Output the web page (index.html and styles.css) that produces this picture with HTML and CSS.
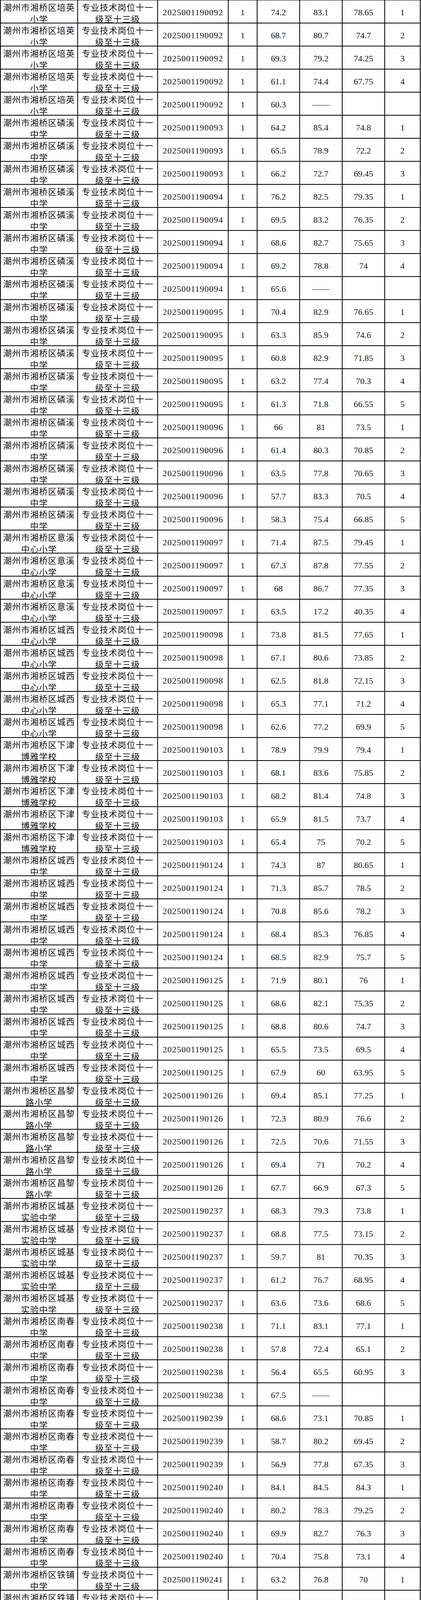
FILE: index.html
```html
<!DOCTYPE html>
<html lang="zh-CN">
<head>
<meta charset="utf-8">
<title>成绩表</title>
<link rel="stylesheet" href="styles.css">
</head>
<body>
<div class="sheet">
<div class="r"><span class="c t">潮州市湘桥区培英小学</span><span class="c t">专业技术岗位十一级至十三级</span><span class="c id">2025001190092</span><span class="c">1</span><span class="c">74.2</span><span class="c">83.1</span><span class="c">78.65</span><span class="c">1</span></div>
<div class="r"><span class="c t">潮州市湘桥区培英小学</span><span class="c t">专业技术岗位十一级至十三级</span><span class="c id">2025001190092</span><span class="c">1</span><span class="c">68.7</span><span class="c">80.7</span><span class="c">74.7</span><span class="c">2</span></div>
<div class="r"><span class="c t">潮州市湘桥区培英小学</span><span class="c t">专业技术岗位十一级至十三级</span><span class="c id">2025001190092</span><span class="c">1</span><span class="c">69.3</span><span class="c">79.2</span><span class="c">74.25</span><span class="c">3</span></div>
<div class="r"><span class="c t">潮州市湘桥区培英小学</span><span class="c t">专业技术岗位十一级至十三级</span><span class="c id">2025001190092</span><span class="c">1</span><span class="c">61.1</span><span class="c">74.4</span><span class="c">67.75</span><span class="c">4</span></div>
<div class="r"><span class="c t">潮州市湘桥区培英小学</span><span class="c t">专业技术岗位十一级至十三级</span><span class="c id">2025001190092</span><span class="c">1</span><span class="c">60.3</span><span class="c">——</span><span class="c"></span><span class="c"></span></div>
<div class="r"><span class="c t">潮州市湘桥区磷溪中学</span><span class="c t">专业技术岗位十一级至十三级</span><span class="c id">2025001190093</span><span class="c">1</span><span class="c">64.2</span><span class="c">85.4</span><span class="c">74.8</span><span class="c">1</span></div>
<div class="r"><span class="c t">潮州市湘桥区磷溪中学</span><span class="c t">专业技术岗位十一级至十三级</span><span class="c id">2025001190093</span><span class="c">1</span><span class="c">65.5</span><span class="c">78.9</span><span class="c">72.2</span><span class="c">2</span></div>
<div class="r"><span class="c t">潮州市湘桥区磷溪中学</span><span class="c t">专业技术岗位十一级至十三级</span><span class="c id">2025001190093</span><span class="c">1</span><span class="c">66.2</span><span class="c">72.7</span><span class="c">69.45</span><span class="c">3</span></div>
<div class="r"><span class="c t">潮州市湘桥区磷溪中学</span><span class="c t">专业技术岗位十一级至十三级</span><span class="c id">2025001190094</span><span class="c">1</span><span class="c">76.2</span><span class="c">82.5</span><span class="c">79.35</span><span class="c">1</span></div>
<div class="r"><span class="c t">潮州市湘桥区磷溪中学</span><span class="c t">专业技术岗位十一级至十三级</span><span class="c id">2025001190094</span><span class="c">1</span><span class="c">69.5</span><span class="c">83.2</span><span class="c">76.35</span><span class="c">2</span></div>
<div class="r"><span class="c t">潮州市湘桥区磷溪中学</span><span class="c t">专业技术岗位十一级至十三级</span><span class="c id">2025001190094</span><span class="c">1</span><span class="c">68.6</span><span class="c">82.7</span><span class="c">75.65</span><span class="c">3</span></div>
<div class="r"><span class="c t">潮州市湘桥区磷溪中学</span><span class="c t">专业技术岗位十一级至十三级</span><span class="c id">2025001190094</span><span class="c">1</span><span class="c">69.2</span><span class="c">78.8</span><span class="c">74</span><span class="c">4</span></div>
<div class="r"><span class="c t">潮州市湘桥区磷溪中学</span><span class="c t">专业技术岗位十一级至十三级</span><span class="c id">2025001190094</span><span class="c">1</span><span class="c">65.6</span><span class="c">——</span><span class="c"></span><span class="c"></span></div>
<div class="r"><span class="c t">潮州市湘桥区磷溪中学</span><span class="c t">专业技术岗位十一级至十三级</span><span class="c id">2025001190095</span><span class="c">1</span><span class="c">70.4</span><span class="c">82.9</span><span class="c">76.65</span><span class="c">1</span></div>
<div class="r"><span class="c t">潮州市湘桥区磷溪中学</span><span class="c t">专业技术岗位十一级至十三级</span><span class="c id">2025001190095</span><span class="c">1</span><span class="c">63.3</span><span class="c">85.9</span><span class="c">74.6</span><span class="c">2</span></div>
<div class="r"><span class="c t">潮州市湘桥区磷溪中学</span><span class="c t">专业技术岗位十一级至十三级</span><span class="c id">2025001190095</span><span class="c">1</span><span class="c">60.8</span><span class="c">82.9</span><span class="c">71.85</span><span class="c">3</span></div>
<div class="r"><span class="c t">潮州市湘桥区磷溪中学</span><span class="c t">专业技术岗位十一级至十三级</span><span class="c id">2025001190095</span><span class="c">1</span><span class="c">63.2</span><span class="c">77.4</span><span class="c">70.3</span><span class="c">4</span></div>
<div class="r"><span class="c t">潮州市湘桥区磷溪中学</span><span class="c t">专业技术岗位十一级至十三级</span><span class="c id">2025001190095</span><span class="c">1</span><span class="c">61.3</span><span class="c">71.8</span><span class="c">66.55</span><span class="c">5</span></div>
<div class="r"><span class="c t">潮州市湘桥区磷溪中学</span><span class="c t">专业技术岗位十一级至十三级</span><span class="c id">2025001190096</span><span class="c">1</span><span class="c">66</span><span class="c">81</span><span class="c">73.5</span><span class="c">1</span></div>
<div class="r"><span class="c t">潮州市湘桥区磷溪中学</span><span class="c t">专业技术岗位十一级至十三级</span><span class="c id">2025001190096</span><span class="c">1</span><span class="c">61.4</span><span class="c">80.3</span><span class="c">70.85</span><span class="c">2</span></div>
<div class="r"><span class="c t">潮州市湘桥区磷溪中学</span><span class="c t">专业技术岗位十一级至十三级</span><span class="c id">2025001190096</span><span class="c">1</span><span class="c">63.5</span><span class="c">77.8</span><span class="c">70.65</span><span class="c">3</span></div>
<div class="r"><span class="c t">潮州市湘桥区磷溪中学</span><span class="c t">专业技术岗位十一级至十三级</span><span class="c id">2025001190096</span><span class="c">1</span><span class="c">57.7</span><span class="c">83.3</span><span class="c">70.5</span><span class="c">4</span></div>
<div class="r"><span class="c t">潮州市湘桥区磷溪中学</span><span class="c t">专业技术岗位十一级至十三级</span><span class="c id">2025001190096</span><span class="c">1</span><span class="c">58.3</span><span class="c">75.4</span><span class="c">66.85</span><span class="c">5</span></div>
<div class="r"><span class="c t">潮州市湘桥区意溪中心小学</span><span class="c t">专业技术岗位十一级至十三级</span><span class="c id">2025001190097</span><span class="c">1</span><span class="c">71.4</span><span class="c">87.5</span><span class="c">79.45</span><span class="c">1</span></div>
<div class="r"><span class="c t">潮州市湘桥区意溪中心小学</span><span class="c t">专业技术岗位十一级至十三级</span><span class="c id">2025001190097</span><span class="c">1</span><span class="c">67.3</span><span class="c">87.8</span><span class="c">77.55</span><span class="c">2</span></div>
<div class="r"><span class="c t">潮州市湘桥区意溪中心小学</span><span class="c t">专业技术岗位十一级至十三级</span><span class="c id">2025001190097</span><span class="c">1</span><span class="c">68</span><span class="c">86.7</span><span class="c">77.35</span><span class="c">3</span></div>
<div class="r"><span class="c t">潮州市湘桥区意溪中心小学</span><span class="c t">专业技术岗位十一级至十三级</span><span class="c id">2025001190097</span><span class="c">1</span><span class="c">63.5</span><span class="c">17.2</span><span class="c">40.35</span><span class="c">4</span></div>
<div class="r"><span class="c t">潮州市湘桥区城西中心小学</span><span class="c t">专业技术岗位十一级至十三级</span><span class="c id">2025001190098</span><span class="c">1</span><span class="c">73.8</span><span class="c">81.5</span><span class="c">77.65</span><span class="c">1</span></div>
<div class="r"><span class="c t">潮州市湘桥区城西中心小学</span><span class="c t">专业技术岗位十一级至十三级</span><span class="c id">2025001190098</span><span class="c">1</span><span class="c">67.1</span><span class="c">80.6</span><span class="c">73.85</span><span class="c">2</span></div>
<div class="r"><span class="c t">潮州市湘桥区城西中心小学</span><span class="c t">专业技术岗位十一级至十三级</span><span class="c id">2025001190098</span><span class="c">1</span><span class="c">62.5</span><span class="c">81.8</span><span class="c">72.15</span><span class="c">3</span></div>
<div class="r"><span class="c t">潮州市湘桥区城西中心小学</span><span class="c t">专业技术岗位十一级至十三级</span><span class="c id">2025001190098</span><span class="c">1</span><span class="c">65.3</span><span class="c">77.1</span><span class="c">71.2</span><span class="c">4</span></div>
<div class="r"><span class="c t">潮州市湘桥区城西中心小学</span><span class="c t">专业技术岗位十一级至十三级</span><span class="c id">2025001190098</span><span class="c">1</span><span class="c">62.6</span><span class="c">77.2</span><span class="c">69.9</span><span class="c">5</span></div>
<div class="r"><span class="c t">潮州市湘桥区下津博雅学校</span><span class="c t">专业技术岗位十一级至十三级</span><span class="c id">2025001190103</span><span class="c">1</span><span class="c">78.9</span><span class="c">79.9</span><span class="c">79.4</span><span class="c">1</span></div>
<div class="r"><span class="c t">潮州市湘桥区下津博雅学校</span><span class="c t">专业技术岗位十一级至十三级</span><span class="c id">2025001190103</span><span class="c">1</span><span class="c">68.1</span><span class="c">83.6</span><span class="c">75.85</span><span class="c">2</span></div>
<div class="r"><span class="c t">潮州市湘桥区下津博雅学校</span><span class="c t">专业技术岗位十一级至十三级</span><span class="c id">2025001190103</span><span class="c">1</span><span class="c">68.2</span><span class="c">81.4</span><span class="c">74.8</span><span class="c">3</span></div>
<div class="r"><span class="c t">潮州市湘桥区下津博雅学校</span><span class="c t">专业技术岗位十一级至十三级</span><span class="c id">2025001190103</span><span class="c">1</span><span class="c">65.9</span><span class="c">81.5</span><span class="c">73.7</span><span class="c">4</span></div>
<div class="r"><span class="c t">潮州市湘桥区下津博雅学校</span><span class="c t">专业技术岗位十一级至十三级</span><span class="c id">2025001190103</span><span class="c">1</span><span class="c">65.4</span><span class="c">75</span><span class="c">70.2</span><span class="c">5</span></div>
<div class="r"><span class="c t">潮州市湘桥区城西中学</span><span class="c t">专业技术岗位十一级至十三级</span><span class="c id">2025001190124</span><span class="c">1</span><span class="c">74.3</span><span class="c">87</span><span class="c">80.65</span><span class="c">1</span></div>
<div class="r"><span class="c t">潮州市湘桥区城西中学</span><span class="c t">专业技术岗位十一级至十三级</span><span class="c id">2025001190124</span><span class="c">1</span><span class="c">71.3</span><span class="c">85.7</span><span class="c">78.5</span><span class="c">2</span></div>
<div class="r"><span class="c t">潮州市湘桥区城西中学</span><span class="c t">专业技术岗位十一级至十三级</span><span class="c id">2025001190124</span><span class="c">1</span><span class="c">70.8</span><span class="c">85.6</span><span class="c">78.2</span><span class="c">3</span></div>
<div class="r"><span class="c t">潮州市湘桥区城西中学</span><span class="c t">专业技术岗位十一级至十三级</span><span class="c id">2025001190124</span><span class="c">1</span><span class="c">68.4</span><span class="c">85.3</span><span class="c">76.85</span><span class="c">4</span></div>
<div class="r"><span class="c t">潮州市湘桥区城西中学</span><span class="c t">专业技术岗位十一级至十三级</span><span class="c id">2025001190124</span><span class="c">1</span><span class="c">68.5</span><span class="c">82.9</span><span class="c">75.7</span><span class="c">5</span></div>
<div class="r"><span class="c t">潮州市湘桥区城西中学</span><span class="c t">专业技术岗位十一级至十三级</span><span class="c id">2025001190125</span><span class="c">1</span><span class="c">71.9</span><span class="c">80.1</span><span class="c">76</span><span class="c">1</span></div>
<div class="r"><span class="c t">潮州市湘桥区城西中学</span><span class="c t">专业技术岗位十一级至十三级</span><span class="c id">2025001190125</span><span class="c">1</span><span class="c">68.6</span><span class="c">82.1</span><span class="c">75.35</span><span class="c">2</span></div>
<div class="r"><span class="c t">潮州市湘桥区城西中学</span><span class="c t">专业技术岗位十一级至十三级</span><span class="c id">2025001190125</span><span class="c">1</span><span class="c">68.8</span><span class="c">80.6</span><span class="c">74.7</span><span class="c">3</span></div>
<div class="r"><span class="c t">潮州市湘桥区城西中学</span><span class="c t">专业技术岗位十一级至十三级</span><span class="c id">2025001190125</span><span class="c">1</span><span class="c">65.5</span><span class="c">73.5</span><span class="c">69.5</span><span class="c">4</span></div>
<div class="r"><span class="c t">潮州市湘桥区城西中学</span><span class="c t">专业技术岗位十一级至十三级</span><span class="c id">2025001190125</span><span class="c">1</span><span class="c">67.9</span><span class="c">60</span><span class="c">63.95</span><span class="c">5</span></div>
<div class="r"><span class="c t">潮州市湘桥区昌黎路小学</span><span class="c t">专业技术岗位十一级至十三级</span><span class="c id">2025001190126</span><span class="c">1</span><span class="c">69.4</span><span class="c">85.1</span><span class="c">77.25</span><span class="c">1</span></div>
<div class="r"><span class="c t">潮州市湘桥区昌黎路小学</span><span class="c t">专业技术岗位十一级至十三级</span><span class="c id">2025001190126</span><span class="c">1</span><span class="c">72.3</span><span class="c">80.9</span><span class="c">76.6</span><span class="c">2</span></div>
<div class="r"><span class="c t">潮州市湘桥区昌黎路小学</span><span class="c t">专业技术岗位十一级至十三级</span><span class="c id">2025001190126</span><span class="c">1</span><span class="c">72.5</span><span class="c">70.6</span><span class="c">71.55</span><span class="c">3</span></div>
<div class="r"><span class="c t">潮州市湘桥区昌黎路小学</span><span class="c t">专业技术岗位十一级至十三级</span><span class="c id">2025001190126</span><span class="c">1</span><span class="c">69.4</span><span class="c">71</span><span class="c">70.2</span><span class="c">4</span></div>
<div class="r"><span class="c t">潮州市湘桥区昌黎路小学</span><span class="c t">专业技术岗位十一级至十三级</span><span class="c id">2025001190126</span><span class="c">1</span><span class="c">67.7</span><span class="c">66.9</span><span class="c">67.3</span><span class="c">5</span></div>
<div class="r"><span class="c t">潮州市湘桥区城基实验中学</span><span class="c t">专业技术岗位十一级至十三级</span><span class="c id">2025001190237</span><span class="c">1</span><span class="c">68.3</span><span class="c">79.3</span><span class="c">73.8</span><span class="c">1</span></div>
<div class="r"><span class="c t">潮州市湘桥区城基实验中学</span><span class="c t">专业技术岗位十一级至十三级</span><span class="c id">2025001190237</span><span class="c">1</span><span class="c">68.8</span><span class="c">77.5</span><span class="c">73.15</span><span class="c">2</span></div>
<div class="r"><span class="c t">潮州市湘桥区城基实验中学</span><span class="c t">专业技术岗位十一级至十三级</span><span class="c id">2025001190237</span><span class="c">1</span><span class="c">59.7</span><span class="c">81</span><span class="c">70.35</span><span class="c">3</span></div>
<div class="r"><span class="c t">潮州市湘桥区城基实验中学</span><span class="c t">专业技术岗位十一级至十三级</span><span class="c id">2025001190237</span><span class="c">1</span><span class="c">61.2</span><span class="c">76.7</span><span class="c">68.95</span><span class="c">4</span></div>
<div class="r"><span class="c t">潮州市湘桥区城基实验中学</span><span class="c t">专业技术岗位十一级至十三级</span><span class="c id">2025001190237</span><span class="c">1</span><span class="c">63.6</span><span class="c">73.6</span><span class="c">68.6</span><span class="c">5</span></div>
<div class="r"><span class="c t">潮州市湘桥区南春中学</span><span class="c t">专业技术岗位十一级至十三级</span><span class="c id">2025001190238</span><span class="c">1</span><span class="c">71.1</span><span class="c">83.1</span><span class="c">77.1</span><span class="c">1</span></div>
<div class="r"><span class="c t">潮州市湘桥区南春中学</span><span class="c t">专业技术岗位十一级至十三级</span><span class="c id">2025001190238</span><span class="c">1</span><span class="c">57.8</span><span class="c">72.4</span><span class="c">65.1</span><span class="c">2</span></div>
<div class="r"><span class="c t">潮州市湘桥区南春中学</span><span class="c t">专业技术岗位十一级至十三级</span><span class="c id">2025001190238</span><span class="c">1</span><span class="c">56.4</span><span class="c">65.5</span><span class="c">60.95</span><span class="c">3</span></div>
<div class="r"><span class="c t">潮州市湘桥区南春中学</span><span class="c t">专业技术岗位十一级至十三级</span><span class="c id">2025001190238</span><span class="c">1</span><span class="c">67.5</span><span class="c">——</span><span class="c"></span><span class="c"></span></div>
<div class="r"><span class="c t">潮州市湘桥区南春中学</span><span class="c t">专业技术岗位十一级至十三级</span><span class="c id">2025001190239</span><span class="c">1</span><span class="c">68.6</span><span class="c">73.1</span><span class="c">70.85</span><span class="c">1</span></div>
<div class="r"><span class="c t">潮州市湘桥区南春中学</span><span class="c t">专业技术岗位十一级至十三级</span><span class="c id">2025001190239</span><span class="c">1</span><span class="c">58.7</span><span class="c">80.2</span><span class="c">69.45</span><span class="c">2</span></div>
<div class="r"><span class="c t">潮州市湘桥区南春中学</span><span class="c t">专业技术岗位十一级至十三级</span><span class="c id">2025001190239</span><span class="c">1</span><span class="c">56.9</span><span class="c">77.8</span><span class="c">67.35</span><span class="c">3</span></div>
<div class="r"><span class="c t">潮州市湘桥区南春中学</span><span class="c t">专业技术岗位十一级至十三级</span><span class="c id">2025001190240</span><span class="c">1</span><span class="c">84.1</span><span class="c">84.5</span><span class="c">84.3</span><span class="c">1</span></div>
<div class="r"><span class="c t">潮州市湘桥区南春中学</span><span class="c t">专业技术岗位十一级至十三级</span><span class="c id">2025001190240</span><span class="c">1</span><span class="c">80.2</span><span class="c">78.3</span><span class="c">79.25</span><span class="c">2</span></div>
<div class="r"><span class="c t">潮州市湘桥区南春中学</span><span class="c t">专业技术岗位十一级至十三级</span><span class="c id">2025001190240</span><span class="c">1</span><span class="c">69.9</span><span class="c">82.7</span><span class="c">76.3</span><span class="c">3</span></div>
<div class="r"><span class="c t">潮州市湘桥区南春中学</span><span class="c t">专业技术岗位十一级至十三级</span><span class="c id">2025001190240</span><span class="c">1</span><span class="c">70.4</span><span class="c">75.8</span><span class="c">73.1</span><span class="c">4</span></div>
<div class="r"><span class="c t">潮州市湘桥区铁铺中学</span><span class="c t">专业技术岗位十一级至十三级</span><span class="c id">2025001190241</span><span class="c">1</span><span class="c">63.2</span><span class="c">76.8</span><span class="c">70</span><span class="c">1</span></div>
<div class="r"><span class="c t">潮州市湘桥区铁铺中学</span><span class="c t">专业技术岗位十一级至十三级</span><span class="c id">2025001190241</span><span class="c">1</span><span class="c">64.1</span><span class="c">75.1</span><span class="c">69.6</span><span class="c">2</span></div>
<div class="r"><span class="c t">潮州市湘桥区铁铺中学</span><span class="c t">专业技术岗位十一级至十三级</span><span class="c id">2025001190241</span><span class="c">1</span><span class="c">59.5</span><span class="c">72.7</span><span class="c">66.1</span><span class="c">3</span></div>
<div class="r"><span class="c t">潮州市湘桥区铁铺中学</span><span class="c t">专业技术岗位十一级至十三级</span><span class="c id">2025001190242</span><span class="c">1</span><span class="c">62.9</span><span class="c">79.4</span><span class="c">71.15</span><span class="c">1</span></div>
<div class="r"><span class="c t">潮州市湘桥区铁铺中学</span><span class="c t">专业技术岗位十一级至十三级</span><span class="c id">2025001190242</span><span class="c">1</span><span class="c">60.6</span><span class="c">74.5</span><span class="c">67.55</span><span class="c">2</span></div>
<div class="r"><span class="c t">潮州市湘桥区铁铺中学</span><span class="c t">专业技术岗位十一级至十三级</span><span class="c id">2025001190243</span><span class="c">1</span><span class="c">74.1</span><span class="c">75.5</span><span class="c">74.8</span><span class="c">1</span></div>
<div class="r"><span class="c t">潮州市湘桥区铁铺中学</span><span class="c t">专业技术岗位十一级至十三级</span><span class="c id">2025001190243</span><span class="c">1</span><span class="c">67.9</span><span class="c">80.5</span><span class="c">74.2</span><span class="c">2</span></div>
<div class="r"><span class="c t">潮州市湘桥区铁铺中学</span><span class="c t">专业技术岗位十一级至十三级</span><span class="c id">2025001190243</span><span class="c">1</span><span class="c">60.5</span><span class="c">86.4</span><span class="c">73.45</span><span class="c">3</span></div>
<div class="r"><span class="c t">潮州市湘桥区铁铺中学</span><span class="c t">专业技术岗位十一级至十三级</span><span class="c id">2025001190243</span><span class="c">1</span><span class="c">59.3</span><span class="c">78.7</span><span class="c">69</span><span class="c">4</span></div>
<div class="r"><span class="c t">潮州市湘桥区铁铺中学</span><span class="c t">专业技术岗位十一级至十三级</span><span class="c id">2025001190243</span><span class="c">1</span><span class="c">60.9</span><span class="c">75.6</span><span class="c">68.25</span><span class="c">5</span></div>
<div class="r"><span class="c t">潮州市湘桥区铁铺中学</span><span class="c t">专业技术岗位十一级至十三级</span><span class="c id">2025001190244</span><span class="c">1</span><span class="c">74.1</span><span class="c">77.2</span><span class="c">75.65</span><span class="c">1</span></div>
<div class="r"><span class="c t">潮州市湘桥区铁铺中学</span><span class="c t">专业技术岗位十一级至十三级</span><span class="c id">2025001190244</span><span class="c">1</span><span class="c">66.9</span><span class="c">83.8</span><span class="c">75.35</span><span class="c">2</span></div>
<div class="r"><span class="c t">潮州市湘桥区铁铺中学</span><span class="c t">专业技术岗位十一级至十三级</span><span class="c id">2025001190244</span><span class="c">1</span><span class="c">70.8</span><span class="c">77.9</span><span class="c">74.35</span><span class="c">3</span></div>
<div class="r"><span class="c t">潮州市湘桥区铁铺中学</span><span class="c t">专业技术岗位十一级至十三级</span><span class="c id">2025001190244</span><span class="c">1</span><span class="c">59.2</span><span class="c">83</span><span class="c">71.1</span><span class="c">4</span></div>
<div class="r"><span class="c t">潮州市湘桥区铁铺中学</span><span class="c t">专业技术岗位十一级至十三级</span><span class="c id">2025001190244</span><span class="c">1</span><span class="c">58.5</span><span class="c">69.9</span><span class="c">64.2</span><span class="c">5</span></div>
<div class="r"><span class="c t">潮州市湘桥区意溪中学</span><span class="c t">专业技术岗位十一级至十三级</span><span class="c id">2025001190246</span><span class="c">1</span><span class="c">69.8</span><span class="c">89.7</span><span class="c">79.75</span><span class="c">1</span></div>
<div class="r"><span class="c t">潮州市湘桥区意溪中学</span><span class="c t">专业技术岗位十一级至十三级</span><span class="c id">2025001190246</span><span class="c">1</span><span class="c">69.8</span><span class="c">81</span><span class="c">75.4</span><span class="c">2</span></div>
<div class="r"><span class="c t">潮州市湘桥区意溪中学</span><span class="c t">专业技术岗位十一级至十三级</span><span class="c id">2025001190246</span><span class="c">1</span><span class="c">70.1</span><span class="c">80.6</span><span class="c">75.35</span><span class="c">3</span></div>
<div class="r"><span class="c t">潮州市湘桥区意溪中学</span><span class="c t">专业技术岗位十一级至十三级</span><span class="c id">2025001190246</span><span class="c">1</span><span class="c">61.6</span><span class="c">79.1</span><span class="c">70.35</span><span class="c">4</span></div>
<div class="r"><span class="c t">潮州市湘桥区意溪中学</span><span class="c t">专业技术岗位十一级至十三级</span><span class="c id">2025001190246</span><span class="c">1</span><span class="c">63.1</span><span class="c">73.6</span><span class="c">68.35</span><span class="c">5</span></div>
<div class="r"><span class="c t">潮州市湘桥区意溪中学</span><span class="c t">专业技术岗位十一级至十三级</span><span class="c id">2025001190247</span><span class="c">1</span><span class="c">62.1</span><span class="c">——</span><span class="c"></span><span class="c"></span></div>
<div class="r"><span class="c t">潮州市湘桥区意溪中学</span><span class="c t">专业技术岗位十一级至十三级</span><span class="c id">2025001190248</span><span class="c">1</span><span class="c">72.1</span><span class="c">74.5</span><span class="c">73.3</span><span class="c">1</span></div>
<div class="r"><span class="c t">潮州市湘桥区意溪中学</span><span class="c t">专业技术岗位十一级至十三级</span><span class="c id">2025001190248</span><span class="c">1</span><span class="c">59.7</span><span class="c">83</span><span class="c">71.35</span><span class="c">2</span></div>
<div class="r"><span class="c t">潮州市湘桥区意溪中学</span><span class="c t">专业技术岗位十一级至十三级</span><span class="c id">2025001190248</span><span class="c">1</span><span class="c">55.5</span><span class="c">72.4</span><span class="c">63.95</span><span class="c">3</span></div>
<div class="r"><span class="c t">潮州市湘桥区意溪中学</span><span class="c t">专业技术岗位十一级至十三级</span><span class="c id">2025001190248</span><span class="c">1</span><span class="c">59.4</span><span class="c">67.6</span><span class="c">63.5</span><span class="c">4</span></div>
<div class="r"><span class="c t">潮州市湘桥区城南实验中学</span><span class="c t">专业技术岗位十一级至十三级</span><span class="c id">2025001190249</span><span class="c">1</span><span class="c">66.6</span><span class="c">86.9</span><span class="c">76.75</span><span class="c">1</span></div>
<div class="r"><span class="c t">潮州市湘桥区城南实验中学</span><span class="c t">专业技术岗位十一级至十三级</span><span class="c id">2025001190249</span><span class="c">1</span><span class="c">63.7</span><span class="c">80.8</span><span class="c">72.25</span><span class="c">2</span></div>
<div class="r"><span class="c t">潮州市湘桥区城南实验中学</span><span class="c t">专业技术岗位十一级至十三级</span><span class="c id">2025001190249</span><span class="c">1</span><span class="c">62.3</span><span class="c">74.9</span><span class="c">68.6</span><span class="c">3</span></div>
<div class="r"><span class="c t">潮州市湘桥区城南实验中学</span><span class="c t">专业技术岗位十一级至十三级</span><span class="c id">2025001190249</span><span class="c">1</span><span class="c">59.5</span><span class="c">73.7</span><span class="c">66.6</span><span class="c">4</span></div>
<div class="r"><span class="c t">潮州市湘桥区城南实验中学</span><span class="c t">专业技术岗位十一级至十三级</span><span class="c id">2025001190249</span><span class="c">1</span><span class="c">63.9</span><span class="c">——</span><span class="c"></span><span class="c"></span></div>
<div class="r"><span class="c t">潮州市湘桥区桥东中心幼儿园</span><span class="c t">专业技术岗位十一级至十三级</span><span class="c id">2025001190277</span><span class="c">1</span><span class="c">64.8</span><span class="c">75.3</span><span class="c">70.05</span><span class="c">1</span></div>
<div class="r"><span class="c t">潮州市湘桥区桥东中心幼儿园</span><span class="c t">专业技术岗位十一级至十三级</span><span class="c id">2025001190277</span><span class="c">1</span><span class="c">58.7</span><span class="c">79.4</span><span class="c">69.05</span><span class="c">2</span></div>
<div class="r"><span class="c t">潮州市湘桥区桥东中心幼儿园</span><span class="c t">专业技术岗位十一级至十三级</span><span class="c id">2025001190277</span><span class="c">1</span><span class="c">56.7</span><span class="c">71.3</span><span class="c">64</span><span class="c">3</span></div>
<div class="r"><span class="c t">潮州市湘桥区桥东中心幼儿园</span><span class="c t">专业技术岗位十一级至十三级</span><span class="c id">2025001190277</span><span class="c">1</span><span class="c">56.7</span><span class="c">68.7</span><span class="c">62.7</span><span class="c">4</span></div>
<div class="r"><span class="c t">潮州市湘桥区桥东中心幼儿园</span><span class="c t">专业技术岗位十一级至十三级</span><span class="c id">2025001190277</span><span class="c">1</span><span class="c">60.1</span><span class="c">——</span><span class="c"></span><span class="c"></span></div>
<div class="r"><span class="c t">潮州市湘桥区铁铺第一幼儿园</span><span class="c t">专业技术岗位十一级至十三级</span><span class="c id">2025001190278</span><span class="c">1</span><span class="c">63.2</span><span class="c">84.9</span><span class="c">74.05</span><span class="c">1</span></div>
<div class="r"><span class="c t">潮州市湘桥区铁铺第一幼儿园</span><span class="c t">专业技术岗位十一级至十三级</span><span class="c id">2025001190278</span><span class="c">1</span><span class="c">58.1</span><span class="c">79.4</span><span class="c">68.75</span><span class="c">2</span></div>
<div class="r"><span class="c t">潮州市湘桥区铁铺第一幼儿园</span><span class="c t">专业技术岗位十一级至十三级</span><span class="c id">2025001190278</span><span class="c">1</span><span class="c">64.7</span><span class="c">71.3</span><span class="c">68</span><span class="c">3</span></div>
<div class="r"><span class="c t">潮州市湘桥区铁铺第一幼儿园</span><span class="c t">专业技术岗位十一级至十三级</span><span class="c id">2025001190278</span><span class="c">1</span><span class="c">55.7</span><span class="c">73.1</span><span class="c">64.4</span><span class="c">4</span></div>
<div class="r"><span class="c t">潮州市湘桥区铁铺第一幼儿园</span><span class="c t">专业技术岗位十一级至十三级</span><span class="c id">2025001190278</span><span class="c">1</span><span class="c">55.8</span><span class="c">70.6</span><span class="c">63.2</span><span class="c">5</span></div>
</div>
</body>
</html>
```

FILE: styles.css
```css
html, body {
  margin: 0;
  padding: 0;
  background: #ffffff;
}

.sheet {
  width: fit-content;
  border-left: 2px solid #000;
  border-top: 1px solid #000;
  overflow: hidden;
  color: #141414;
  font-family: "Liberation Serif", "Noto Sans CJK SC", serif;
  font-size: 22px;
}

.r {
  display: grid;
  grid-template-columns: 198px 205px 181px 74px 109px 109px 109px 91px;
  height: 59px;
}

.c {
  box-sizing: border-box;
  height: 59px;
  border-right: 2px solid #000;
  border-bottom: 2px solid #000;
  padding: 5px 2px 0;
  display: flex;
  align-items: center;
  justify-content: center;
  text-align: center;
  line-height: 30px;
  white-space: nowrap;
}

.c.t {
  font-family: "Noto Sans CJK SC", "Noto Sans", sans-serif;
  letter-spacing: 1px;
  white-space: normal;
}

.c.id {
  letter-spacing: 1px;
}
```
